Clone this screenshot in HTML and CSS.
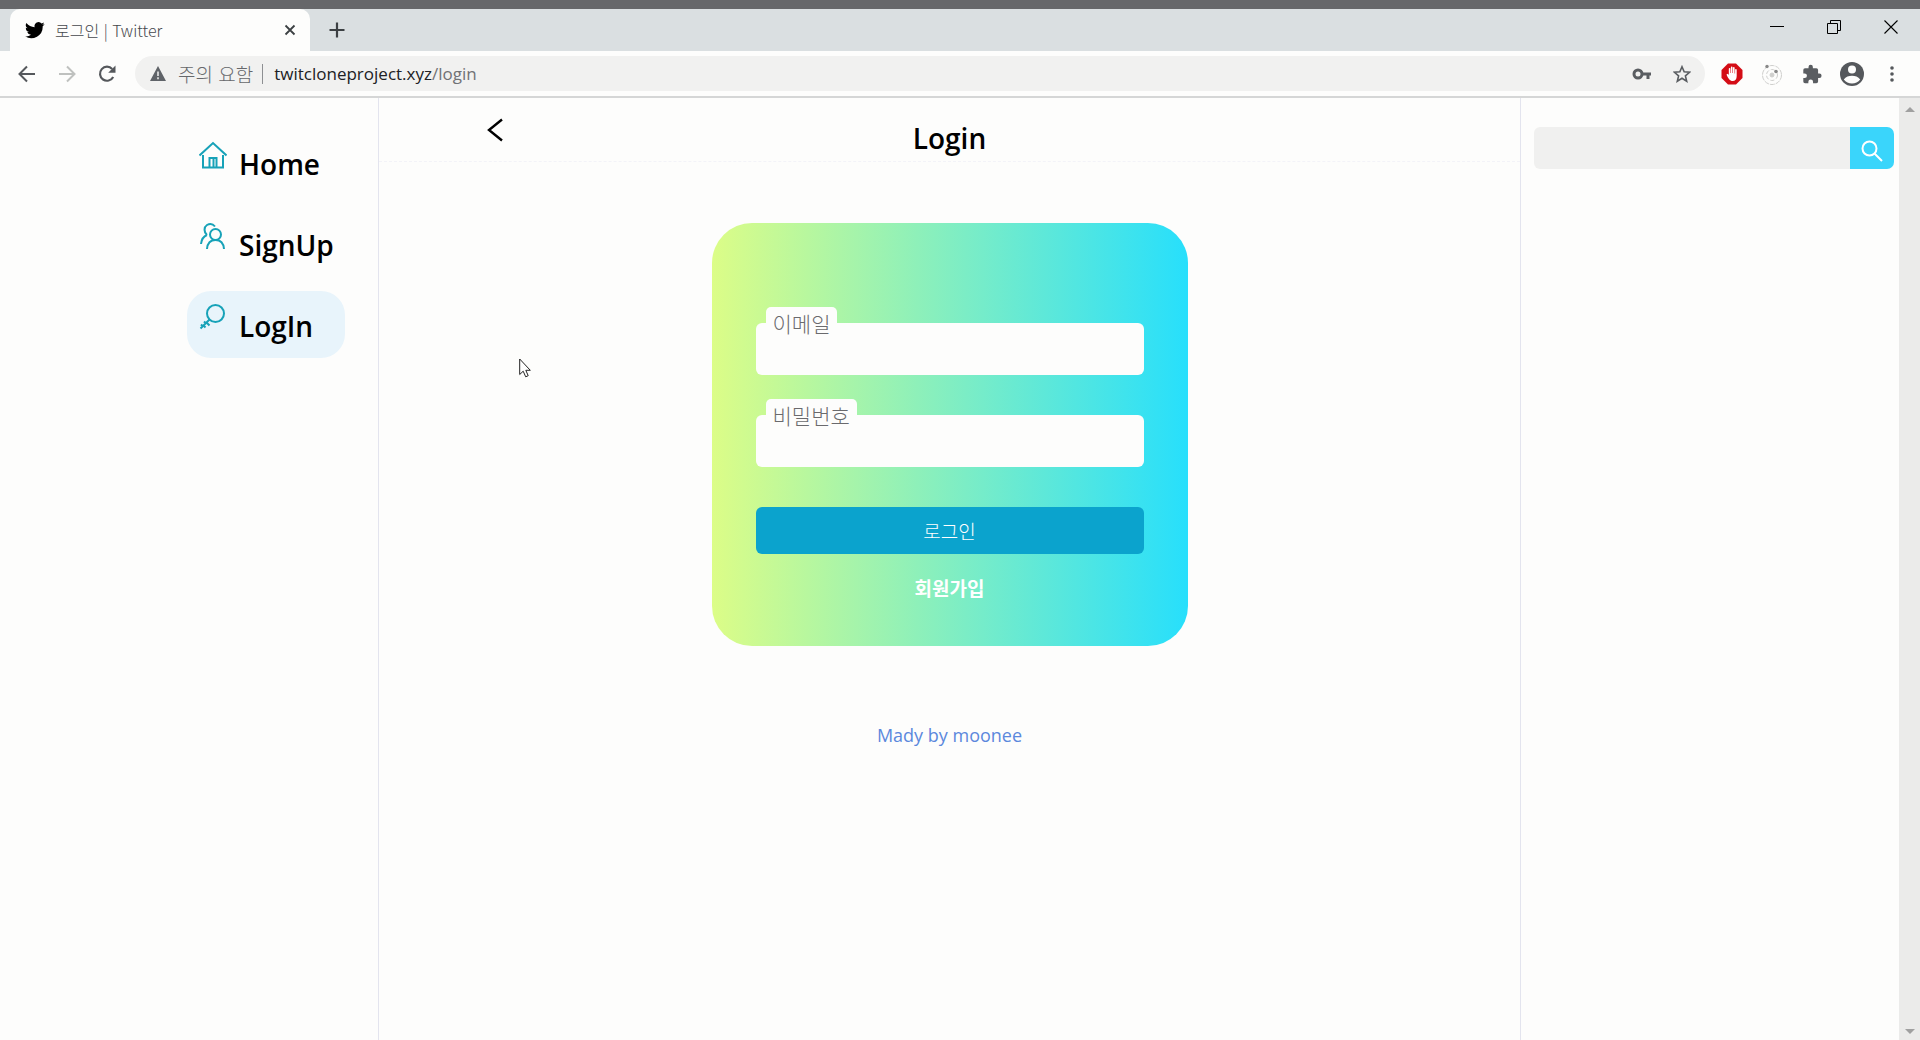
FILE: index.html
```html
<!DOCTYPE html>
<html lang="ko">
<head>
<meta charset="utf-8">
<meta name="viewport" content="width=device-width, initial-scale=1">
<title>로그인 | Twitter</title>
<link rel="stylesheet" href="styles.css">
</head>
<body>
<div class="browser">
  <div class="tabstrip">
    <div class="tab">
      <svg class="bird" viewBox="0 0 24 24" width="20" height="20" aria-hidden="true"><path d="M23.6 4.9a9.6 9.6 0 0 1-2.8.8 4.9 4.9 0 0 0 2.1-2.7 9.7 9.7 0 0 1-3 1.2 4.8 4.8 0 0 0-8.300 4.400A13.700 13.700 0 0 1 1.700 3.600a4.800 4.800 0 0 0 1.500 6.400 4.800 4.800 0 0 1-2.200-.6v.1a4.800 4.800 0 0 0 3.900 4.700 4.800 4.800 0 0 1-2.200.1 4.800 4.800 0 0 0 4.500 3.300A9.700 9.700 0 0 1 0 19.600 13.700 13.700 0 0 0 21.200 7.400a9.800 9.800 0 0 0 2.400-2.500z"/></svg>
      <span class="tab-title">로그인 | Twitter</span>
      <button class="icon-button" type="button" aria-label="탭 닫기"><svg viewBox="0 0 12 12" width="12" height="12"><path d="M1.500 1.500l9 9M10.500 1.500l-9 9" stroke="#3c4043" stroke-width="1.800"/></svg></button>
    </div>
    <button class="icon-button new-tab" type="button" aria-label="새 탭"><svg viewBox="0 0 16 16" width="16" height="16"><path d="M8 0.500v15M.5 8h15" stroke="#3c4043" stroke-width="2.200"/></svg></button>
    <div class="window-controls">
      <button class="icon-button" type="button" aria-label="최소화"><svg viewBox="0 0 14 14" width="14" height="14"><path d="M0 6.500h14" stroke="#000"/></svg></button>
      <button class="icon-button" type="button" aria-label="이전 크기로"><svg viewBox="0 0 14 14" width="14" height="14" fill="none" stroke="#000"><path d="M.5 3.500h10v10h-10zM3.500 3.500v-3h10v10h-3"/></svg></button>
      <button class="icon-button" type="button" aria-label="닫기"><svg viewBox="0 0 14 14" width="14" height="14"><path d="M.5.5l13 13M13.500.5l-13 13" stroke="#000" stroke-width="1.100"/></svg></button>
    </div>
  </div>

  <div class="toolbar">
    <div class="nav-buttons">
      <button class="icon-button" type="button" aria-label="뒤로"><svg viewBox="0 0 18 18" width="18" height="18" fill="none" stroke="#55585c" stroke-width="2"><path d="M17 9H2M9 1.500L1.500 9 9 16.500"/></svg></button>
      <button class="icon-button" type="button" aria-label="앞으로"><svg viewBox="0 0 18 18" width="18" height="18" fill="none" stroke="#bfc1bf" stroke-width="2"><path d="M1 9h15M9 1.500L16.500 9 9 16.500"/></svg></button>
      <button class="icon-button" type="button" aria-label="새로고침"><svg viewBox="0 0 18 18" width="18" height="18"><path d="M15.200 12a7 7 0 1 1-1-8" fill="none" stroke="#55585c" stroke-width="2.200"/><path d="M17.500.5v7.300h-7.300z" fill="#55585c"/></svg></button>
    </div>
    <div class="omnibox">
      <svg viewBox="0 0 16 15" width="16" height="15" aria-hidden="true"><path d="M8 0l8 15H0z" fill="#5f6368"/><path d="M8 5.500v4.500M8 11.200v2" stroke="#f1f1f0" stroke-width="1.500"/></svg>
      <span class="warning">주의 요함</span>
      <span class="divider"></span>
      <span class="url">twitcloneproject.xyz<span class="url-path">/login</span></span>
      <button class="icon-button" type="button" aria-label="비밀번호 관리"><svg viewBox="0 0 20 12" width="20" height="12" fill="none" stroke="#5a5d61"><circle cx="6" cy="6" r="4" stroke-width="3"/><path d="M10 6h9M16 6v5" stroke-width="3"/></svg></button>
      <button class="icon-button" type="button" aria-label="북마크"><svg viewBox="0 0 20 20" width="18" height="18"><path d="M10 2l2.400 5.600 6 .5-4.600 4 1.400 5.900-5.200-3.200L4.800 18l1.400-5.900-4.600-4 6-.5z" fill="none" stroke="#5a5d61" stroke-width="1.800"/></svg></button>
    </div>
    <div class="extensions">
      <button class="icon-button" type="button" aria-label="광고 차단"><svg viewBox="0 0 22 22" width="22" height="22"><path d="M7 .5h8L21.500 7v8L15 21.500H7L.5 15V7z" fill="#d40d16"/><path d="M5.500 11.500l1.300-.8 1 1.300V5.800a.8.800 0 0 1 1.600 0V10h.5V4.300a.8.800 0 0 1 1.600 0V10h.5V4.800a.8.800 0 0 1 1.600 0V10.500h.5V6.800a.8.800 0 0 1 1.600 0V13c0 3.500-1.500 5-4 5-2.800 0-4.500-2.500-6.200-6.500z" fill="#fff"/></svg></button>
      <button class="icon-button" type="button" aria-label="확장 프로그램"><svg viewBox="0 0 22 22" width="22" height="22" fill="none" stroke="#cfcfcd"><circle cx="11" cy="12" r="9.500" stroke-dasharray="5 1"/><circle cx="11" cy="12" r="5.500" stroke-dasharray="4 2"/><circle cx="11" cy="12" r="2" fill="#cfcfcd"/><circle cx="6" cy="3.500" r="1.700" fill="#888" stroke="none"/><circle cx="15" cy="8.500" r="1.800" fill="#888" stroke="none"/></svg></button>
      <button class="icon-button" type="button" aria-label="확장 프로그램 관리"><svg viewBox="1 0 22 23" width="20" height="20"><path d="M20.500 11H19V7a2 2 0 0 0-2-2h-4V3.500a2.500 2.500 0 0 0-5 0V5H4a2 2 0 0 0-2 2v3.800h1.500a2.700 2.700 0 0 1 0 5.400H2V20a2 2 0 0 0 2 2h3.800v-1.500a2.700 2.700 0 0 1 5.400 0V22H17a2 2 0 0 0 2-2v-4h1.500a2.500 2.500 0 0 0 0-5z" fill="#5a5d61"/></svg></button>
      <button class="icon-button" type="button" aria-label="프로필"><svg viewBox="0 0 24 24" width="24" height="24"><circle cx="12" cy="12" r="12" fill="#55585c"/><circle cx="12" cy="7.500" r="4" fill="#fdfdfc"/><path d="M3.800 17.500c2-2.800 5-3.800 8.200-3.800s6.200 1 8.200 3.800c-2 2.700-5 4-8.200 4s-6.200-1.300-8.200-4z" fill="#fdfdfc"/></svg></button>
      <button class="icon-button" type="button" aria-label="메뉴"><svg viewBox="0 0 4 16" width="4" height="16" fill="#55585c"><circle cx="2" cy="2" r="1.800"/><circle cx="2" cy="8" r="1.800"/><circle cx="2" cy="14" r="1.800"/></svg></button>
    </div>
  </div>

  <div class="viewport">
    <nav class="sidebar">
      <a class="nav-link" href="#home">
        <svg viewBox="0 0 28 28" width="28" height="28"><path d="M.5 14.500L14 2l13.500 12.500M4 14v12.500h6.500V17h7v9.500H24V14M10 26.500h8M14.500 17v9"/></svg>
        <span>Home</span>
      </a>
      <a class="nav-link" href="#signup">
        <svg viewBox="0 0 28 28" width="28" height="28"><circle cx="16.500" cy="12.500" r="5.500"/><path d="M8 27c.5-6 4-9 8.500-9s8 3 8.500 9M8 13c-3.500-3-3-8 0-10 3-1.800 6-1 8 1.500M8 13c-4 1.500-5.500 4.500-6 9"/></svg>
        <span>SignUp</span>
      </a>
      <a class="nav-link active" href="#login">
        <svg viewBox="0 0 28 28" width="28" height="28"><circle cx="16.500" cy="10.500" r="8.500"/><path d="M10.500 16.500L1.500 25.500M7.500 19.500l3 3M4.500 22.500l2 2M5 18.500l2 2M2 21.500l2 2"/></svg>
        <span>LogIn</span>
      </a>
    </nav>

    <main class="main">
      <header class="page-header">
        <button class="icon-button back" type="button" aria-label="뒤로"><svg viewBox="0 0 16 24" width="16" height="24"><path d="M15 1.500L2 12l13 10.500" fill="none" stroke="#000" stroke-width="2.400"/></svg></button>
        <h1>Login</h1>
      </header>
      <form class="login-card">
        <div class="field">
          <label for="email">이메일</label>
          <input id="email" type="email">
        </div>
        <div class="field">
          <label for="password">비밀번호</label>
          <input id="password" type="password">
        </div>
        <button class="submit" type="button">로그인</button>
        <a class="join" href="#signup">회원가입</a>
      </form>
      <footer class="credit">Mady by moonee</footer>
    </main>

    <aside class="aside">
      <form class="search">
        <input type="search" aria-label="검색">
        <button type="button" aria-label="검색"><svg viewBox="0 0 22 22" width="22" height="22" fill="none" stroke="#fff" stroke-width="2"><circle cx="8.500" cy="8.500" r="7"/><path d="M13.500 13.500l7.500 7.500"/></svg></button>
      </form>
    </aside>

    <div class="scrollbar" aria-hidden="true">
      <svg viewBox="0 0 10 5" width="10" height="5"><path d="M0 5l5-5 5 5z" fill="#a0a0a0"/></svg>
      <svg viewBox="0 0 10 5" width="10" height="5"><path d="M0 0l5 5 5-5z" fill="#a0a0a0"/></svg>
    </div>
  </div>
</div>
<svg class="cursor" viewBox="0 0 12 20" width="12" height="20" aria-hidden="true"><path d="M.7 1v15.500l3.500-3.300 2.500 5.600 2.500-1.100-2.400-5.400h4.500z" fill="#fff" stroke="#222"/></svg>
</body>
</html>
```
FILE: styles.css
```css
* {
  box-sizing: border-box;
}

body {
  margin: 0;
  background: #fdfdfc;
  color: #000;
  font-family: "Open Sans", "Noto Sans CJK KR", sans-serif;
}

a {
  color: inherit;
  text-decoration: none;
}

svg {
  display: block;
  flex: none;
}

.browser {
  display: flex;
  flex-direction: column;
  min-height: 100vh;
  border-top: 9px solid #66676a;
}

.icon-button {
  display: grid;
  place-items: center;
  flex: none;
  width: 40px;
  height: 32px;
  padding: 0;
  border: 0;
  background: none;
}

/* Tab strip */
.tabstrip {
  display: flex;
  align-items: stretch;
  height: 42px;
  padding-left: 10px;
  background: #dadfe1;
}

.tab {
  display: flex;
  align-items: center;
  gap: 10px;
  width: 300px;
  padding-left: 15px;
  border-radius: 10px 10px 0 0;
  background: #fdfdfc;
}

.tab-title {
  flex: 1;
  color: #45484c;
  font-family: "Noto Sans CJK KR", sans-serif;
  font-size: 16px;
  font-weight: 300;
  line-height: 20px;
}

.new-tab {
  align-self: center;
  margin-left: 7px;
}

.window-controls {
  display: flex;
  align-items: center;
  gap: 17px;
  margin-left: auto;
  padding: 0 9px 6px 0;
}

/* Toolbar */
.toolbar {
  display: flex;
  align-items: center;
  height: 47px;
  padding: 0 8px 0 7px;
  border-bottom: 2px solid #d5d6d6;
}

.nav-buttons,
.extensions {
  display: flex;
}

.omnibox {
  display: flex;
  align-items: center;
  flex: 1;
  height: 35px;
  margin: 0 7px 0 8px;
  padding: 0 3px 0 15px;
  border-radius: 18px;
  background: #f1f1f0;
  font-size: 18px;
}

.warning {
  margin-left: 12px;
  color: #66686b;
  font-family: "Noto Sans CJK KR", sans-serif;
  font-size: 19px;
  font-weight: 300;
  line-height: 24px;
}

.divider {
  width: 1px;
  height: 20px;
  margin: 0 11px 0 9px;
  background: #8d8f92;
}

.url {
  flex: 1;
  color: #202124;
  font-size: 17px;
}

.url-path {
  color: #707275;
}

/* Page */
.viewport {
  display: grid;
  grid-template-columns: 379px minmax(0, 1fr) 379px 21px;
  flex: 1;
}

.sidebar {
  display: flex;
  flex-direction: column;
  align-items: flex-start;
  gap: 14px;
  padding: 31px 0 0 187px;
  border-right: 1px solid #e3e4ee;
}

.nav-link {
  display: flex;
  gap: 12px;
  height: 67px;
  padding: 12px;
  border-radius: 24px;
  font-size: 28px;
  font-weight: 600;
  line-height: 46px;
}

.nav-link svg {
  fill: none;
  stroke: #17a2b8;
  stroke-width: 2;
}

.nav-link.active {
  width: 158px;
  background: #e8f4fb;
}

.main {
  display: flex;
  flex-direction: column;
  align-items: center;
}

.page-header {
  display: grid;
  grid-template-columns: 1fr auto 1fr;
  align-self: stretch;
  height: 64px;
  padding: 16px 96px 0;
  border-bottom: 1px dashed #f3f3f8;
}

.page-header h1 {
  margin: 0;
  font-size: 28px;
  font-weight: 600;
  line-height: 48px;
}

.login-card {
  display: flex;
  flex-direction: column;
  width: 476px;
  height: 423px;
  margin-top: 61px;
  padding: 84px 44px 0;
  border-radius: 40px;
  background: linear-gradient(90deg, #dcfd87, #27dffc);
}

.field {
  display: flex;
  flex-direction: column;
  align-items: flex-start;
  margin-bottom: 24px;
}

.field label {
  z-index: 1;
  height: 28px;
  margin: 0 0 -12px 10px;
  padding: 0 7px;
  border-radius: 5px;
  background: #fdfdfc;
  color: #6a6a6d;
  font-family: "Noto Sans CJK KR", sans-serif;
  font-size: 21px;
  font-weight: 300;
  line-height: 32px;
}

.field input {
  width: 100%;
  height: 52px;
  padding: 0 16px;
  border: 0;
  border-radius: 6px;
  background: #fdfdfc;
  font-size: 18px;
}

.submit {
  height: 47px;
  margin-top: 16px;
  padding: 0;
  border: 0;
  border-radius: 6px;
  background: #0ba3cd;
  color: #fff;
  font-family: "Noto Sans CJK KR", sans-serif;
  font-size: 19px;
  font-weight: 300;
}

.join {
  align-self: center;
  margin-top: 20px;
  color: #fff;
  font-family: "Noto Sans CJK KR", sans-serif;
  font-size: 19px;
  font-weight: 700;
  line-height: 28px;
}

.credit {
  margin-top: 75px;
  color: #5b88dd;
  font-size: 18px;
  line-height: 28px;
}

.aside {
  padding: 29px 5px 0 13px;
  border-left: 1px solid #e3e4ee;
}

.search {
  display: flex;
  height: 42px;
}

.search input {
  flex: 1;
  min-width: 0;
  padding: 0 12px;
  border: 0;
  border-radius: 6px 0 0 6px;
  background: #f0f0ef;
  font-size: 18px;
}

.search button {
  display: grid;
  place-items: center;
  width: 44px;
  padding: 6px 0 0;
  border: 0;
  border-radius: 0 7px 7px 0;
  background: #3ad5fb;
}

.scrollbar {
  display: flex;
  flex-direction: column;
  align-items: center;
  justify-content: space-between;
  padding: 9px 0 6px;
  background: #ebebea;
}

/* Mouse pointer above the page */
.cursor {
  position: absolute;
  top: 358px;
  left: 519px;
}
```
